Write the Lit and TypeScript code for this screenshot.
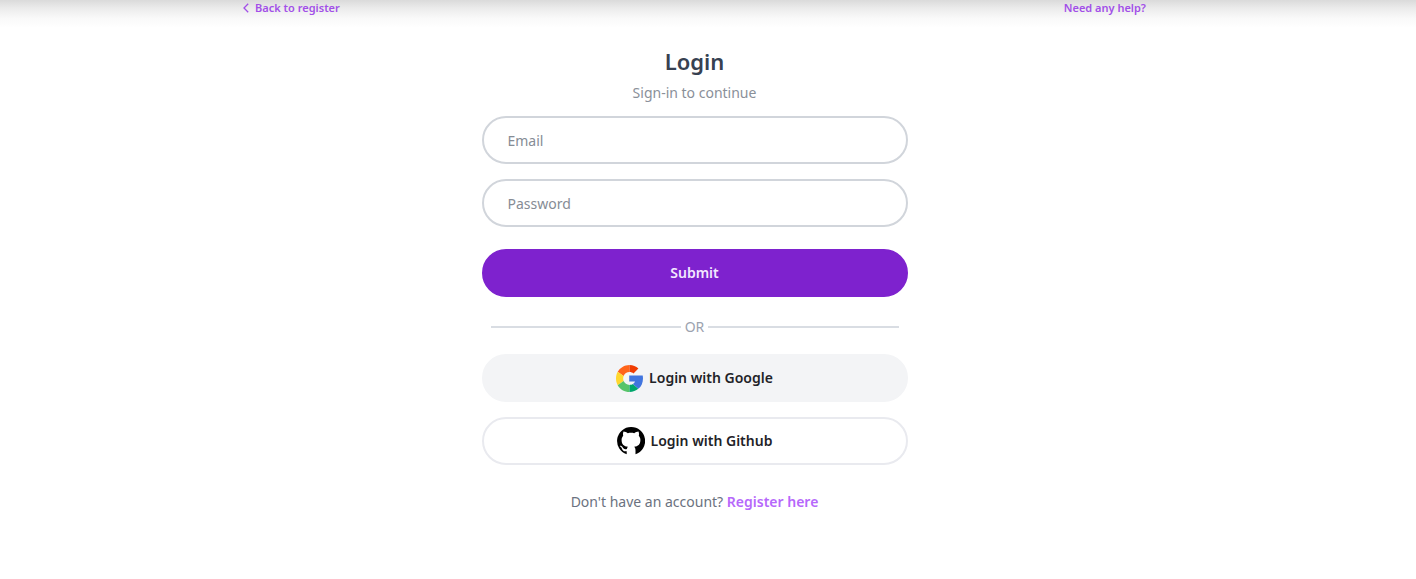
import { LitElement, html, css } from "lit";
import { customElement } from "lit/decorators.js";

@customElement("app-root")
export class AppRoot extends LitElement {
  static styles = css`
    :host {
      display: block;
      min-height: 100vh;
      box-sizing: border-box;
      padding: 0 27px 24px 0;
      background: linear-gradient(#dadada 0, #ebebeb 8px, #f9f9f9 18px, #fff 28px) #fff;
      font-family: "Noto Sans", "Open Sans", sans-serif;
      font-size: 14px;
      line-height: 20px;
      color: #6b7280;
    }
    * {
      box-sizing: border-box;
    }
    a {
      color: #a855f7;
      font-weight: 600;
      text-decoration: none;
    }
    .top {
      display: flex;
      justify-content: space-between;
      width: 65%;
      margin: 0 auto;
      font-size: 11px;
      line-height: 16px;
    }
    .top a {
      display: flex;
      align-items: center;
      gap: 6px;
      color: #a24fe8;
    }
    .chevron {
      width: 6px;
      height: 10px;
    }
    form {
      display: flex;
      flex-direction: column;
      gap: 15px;
      max-width: 426px;
      margin: 29px auto 0;
    }
    .heading {
      text-align: center;
      color: #8a9099;
    }
    h1 {
      margin: 0;
      font-size: 22px;
      line-height: 32px;
      font-weight: 600;
      color: #374151;
    }
    .heading p {
      margin: 8px 0 0;
      line-height: 16px;
    }
    input,
    button {
      display: flex;
      align-items: center;
      justify-content: center;
      gap: 6px;
      width: 100%;
      height: 48px;
      margin: 0;
      border: 2px solid #d1d5db;
      border-radius: 24px;
      background: #fff;
      font: inherit;
      color: #1f2328;
    }
    input {
      padding: 0 24px;
    }
    input::placeholder {
      color: #868c95;
      opacity: 1;
    }
    button {
      padding: 0;
      font-weight: 600;
      cursor: pointer;
    }
    .submit {
      margin-top: 7px;
      border-color: #7e22ce;
      background: #7e22ce;
      color: #f3e8ff;
    }
    .divider {
      display: flex;
      align-items: center;
      gap: 4px;
      margin: 5px 9px 2px;
      color: #9ca3af;
    }
    .divider::before,
    .divider::after {
      content: "";
      flex: 1;
      height: 2px;
      background: #d9dde3;
    }
    .google {
      border-color: #f3f4f6;
      background: #f3f4f6;
    }
    .github {
      border-color: #e9eaef;
    }
    .google svg {
      width: 27px;
      height: 27px;
    }
    .github svg {
      width: 28px;
      height: 28px;
    }
    .register {
      margin: 12px 0 0;
      text-align: center;
    }
    .register a {
      color: #b668fb;
    }
  `;

  render() {
    return html`
      <nav class="top">
        <a href="#register">
          <svg class="chevron" viewBox="0 0 6 10" fill="none" stroke="currentColor" stroke-width="1.3" aria-hidden="true">
            <path d="M5.2 .8 1 5l4.2 4.2" />
          </svg>
          Back to register
        </a>
        <a href="#help">Need any help?</a>
      </nav>
      <form @submit=${(e: Event) => e.preventDefault()}>
        <div class="heading">
          <h1>Login</h1>
          <p>Sign-in to continue</p>
        </div>
        <input type="email" aria-label="Email" placeholder="Email" />
        <input type="password" aria-label="Password" placeholder="Password" />
        <button class="submit" type="submit">Submit</button>
        <div class="divider">OR</div>
        <button class="google" type="button">
          <svg viewBox="0 0 48 48" aria-hidden="true">
            <path fill="#ff641a" d="M24 0v12.500c-4.800 0-8.600 2.700-10.500 6.900L3 12.200C7.200 4.900 15 0 24 0Z" />
            <path fill="#f03c02" d="M24 0c6.200 0 11.700 2.300 15.800 6.100l-8.700 9C29.200 13.500 27 12.500 24 12.500Z" />
            <path fill="#ffd72e" d="m3 12.200 10.500 7.200c-1 2.800-1 6.400 0 9.200L3 35.800c-4-7-4-16.600 0-23.600Z" />
            <path fill="#57c46a" d="M13.500 28.600 3 35.800C7.200 43.100 15 48 24 48V35.500c-4.800 0-8.600-2.700-10.500-6.900Z" />
            <path fill="#00a66c" d="M24 35.500V48c6.200 0 11.700-2 15.700-5.600l-9.700-8.500C28.200 35 26.500 35.500 24 35.500Z" />
            <path fill="#4175df" d="M23.500 18.500h24C49.200 28 46.300 37 39.700 42.400L30 33.900c1.800-1.100 3-2.600 3.800-4.400H23.500Z" />
          </svg>
          Login with Google
        </button>
        <button class="github" type="button">
          <svg viewBox="0 0 28 28" fill="#000" aria-hidden="true">
            <path d="M14 0A14 14 0 0 0 9.700 27.300V24.200C6.500 24.800 5.600 23.200 5 21.700 4.500 20.500 3.700 20 3 19.300c-.5-.6.600-.8 1.400-.3C5.800 19.800 6.300 22.200 8.200 22.300c.7 0 1.300-.1 1.700-.4.100-.8.500-1.600 1-2.100C7 19.300 4.600 17.500 4.600 13c0-1.700.600-3.200 1.600-4.300-.4-1.500-.2-3 .3-4.300 1.600 0 3 .8 4.300 1.800 2.100-.5 4.300-.5 6.400 0 1.300-1 2.700-1.800 4.300-1.800.5 1.300.7 2.800.3 4.300 1 1.100 1.600 2.600 1.600 4.300 0 4.500-2.400 6.300-6.200 6.800.9.900 1.300 2.100 1.300 3.700v3.800A14 14 0 0 0 14 0Z" />
          </svg>
          Login with Github
        </button>
        <p class="register">Don't have an account? <a href="#register">Register here</a></p>
      </form>
    `;
  }
}
